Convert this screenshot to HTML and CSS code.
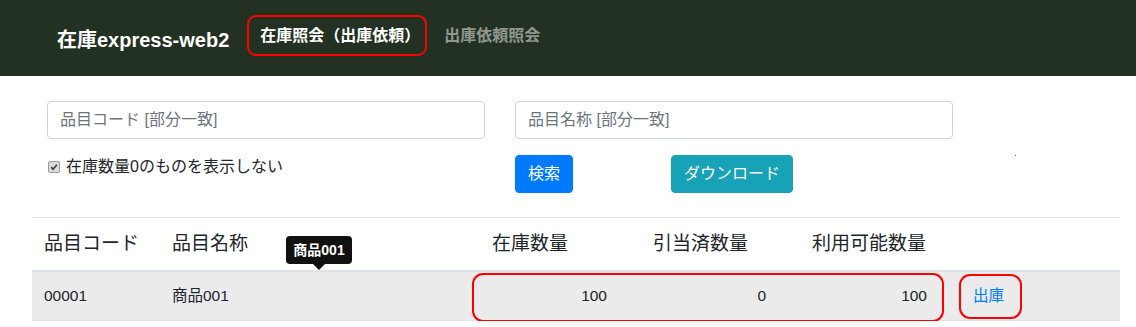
FILE: index.html
```html
<!DOCTYPE html>
<html lang="ja">
<head>
    <meta charset="UTF-8">
    <meta name="viewport" content="width=device-width, initial-scale=1.0">
    <title>在庫express-web2</title>
    <link rel="stylesheet" href="styles.css">
</head>
<body>

    <nav class="navbar">
        <a class="brand" href="#">在庫express-web2</a>
        <ul class="nav">
            <li><a class="nav-link active" href="#">在庫照会（出庫依頼<span class="paren">）</span></a></li>
            <li><a class="nav-link" href="#">出庫依頼照会</a></li>
        </ul>
    </nav>

    <main class="content">
        <form class="search">
            <div class="field"><input type="text" placeholder="品目コード [部分一致]"></div>
            <div class="field"><input type="text" placeholder="品目名称 [部分一致]"></div>
            <div class="field"></div>
            <div class="field">
                <label class="check">
                    <span class="box">
                        <svg width="12" height="12" viewBox="0 0 12 12"><path d="M2.6 6.2 L4.9 8.6 L9.4 3.2" fill="none" stroke="#3a3a3a" stroke-width="2"/></svg>
                    </span>
                    在庫数量0のものを表示しない
                </label>
            </div>
            <div class="field buttons">
                <button type="button" class="btn btn-primary">検索</button>
                <button type="button" class="btn btn-info">ダウンロード</button>
            </div>
            <div class="field"><span class="dot"></span></div>
        </form>

        <div class="result">
            <table>
                <colgroup>
                    <col style="width: 128px">
                    <col style="width: 320px">
                    <col style="width: 161px">
                    <col style="width: 159px">
                    <col style="width: 161px">
                    <col>
                </colgroup>
                <thead>
                    <tr>
                        <th>品目コード</th>
                        <th>品目名称</th>
                        <th>在庫数量</th>
                        <th>引当済数量</th>
                        <th>利用可能数量</th>
                        <th></th>
                    </tr>
                </thead>
                <tbody>
                    <tr>
                        <td>00001</td>
                        <td>商品001</td>
                        <td class="num">100</td>
                        <td class="num">0</td>
                        <td class="num">100</td>
                        <td><a href="#" class="ship">出庫</a></td>
                    </tr>
                </tbody>
            </table>

            <!-- tooltip over the name cell -->
            <div class="tooltip">商品001</div>

            <!-- red marks -->
            <div class="mark mark-qty"></div>
            <div class="mark mark-ship"></div>
        </div>
    </main>

</body>
</html>
```

FILE: styles.css
```css
body {
    margin: 0;
    font-family: 'Liberation Sans', 'Noto Sans CJK JP', sans-serif;
    color: #212529;
    background-color: #fff;
}

.navbar {
    height: 76px;
    background-color: #233122;
    display: flex;
    align-items: center;
    padding-left: 57px;
}
.brand {
    color: #fff;
    font-size: 20px;
    font-weight: bold;
    text-decoration: none;
    margin-right: 18px;
    white-space: nowrap;
}
.nav {
    list-style: none;
    margin: 0 0 5px 0;
    padding: 0;
    display: flex;
    gap: 4px;
}
.nav-link {
    display: block;
    padding: 8px 11px;
    border: 2px solid transparent;
    border-radius: 9px;
    font-size: 16px;
    line-height: 21px;
    font-weight: bold;
    color: rgba(255, 255, 255, 0.5);
    text-decoration: none;
    white-space: nowrap;
}
.nav-link.active {
    color: #fff;
    border-color: #f00;
}
.paren {
    margin-right: -6px;
}

.content {
    padding: 25px 16px 0 32px;
}

.search {
    display: grid;
    grid-template-columns: 468px 468px 1fr;
    row-gap: 16px;
}
.field {
    padding: 0 15px;
}
.field input {
    box-sizing: border-box;
    width: 100%;
    height: 38px;
    padding: 6px 12px;
    font-family: inherit;
    font-size: 16px;
    color: #495057;
    border: 1px solid #ced4da;
    border-radius: 4px;
}
.field input::placeholder {
    color: #6c757d;
}

.check {
    display: flex;
    align-items: center;
    font-size: 16px;
    line-height: 24px;
}
.box {
    box-sizing: border-box;
    width: 12px;
    height: 12px;
    margin: 0 6px 0 1px;
    border: 1px solid #9a9a9a;
    border-radius: 2px;
    background-color: #dcdcdc;
    display: flex;
    align-items: center;
    justify-content: center;
}
.box svg {
    width: 10px;
    height: 10px;
}

.buttons {
    display: flex;
    gap: 98px;
}
.btn {
    height: 38px;
    padding: 6px 12px;
    border: 1px solid transparent;
    border-radius: 4px;
    font-family: inherit;
    font-size: 16px;
    line-height: 24px;
    color: #fff;
    cursor: pointer;
}
.btn-primary {
    background-color: #007bff;
    border-color: #007bff;
}
.btn-info {
    background-color: #17a2b8;
    border-color: #17a2b8;
}

.dot {
    display: block;
    width: 1px;
    height: 1px;
    margin-left: 32px;
    background-color: #a33;
}

.result {
    position: relative;
    margin-top: 24px;
}
table {
    width: 100%;
    border-collapse: collapse;
    table-layout: fixed;
}
th {
    text-align: left;
    font-weight: normal;
    font-size: 19px;
    line-height: 28px;
    padding: 12px;
    border-top: 1px solid #dee2e6;
    border-bottom: 2px solid #dee2e6;
    white-space: nowrap;
}
td {
    font-size: 15.5px;
    line-height: 24px;
    padding: 12px;
    background-color: #ebebeb;
    border-bottom: 1px solid #dee2e6;
}
td.num {
    text-align: right;
    padding-right: 34px;
}
.ship {
    color: #007bff;
    text-decoration: none;
}

.tooltip {
    position: absolute;
    left: 254px;
    top: 19px;
    width: 66px;
    box-sizing: border-box;
    padding: 4px 0;
    text-align: center;
    font-size: 14px;
    line-height: 20px;
    font-weight: bold;
    color: #fff;
    background-color: #111;
    border-radius: 4px;
}
.tooltip::after {
    content: '';
    position: absolute;
    left: 27px;
    bottom: -6px;
    border-left: 6px solid transparent;
    border-right: 6px solid transparent;
    border-top: 6px solid #111;
}

.mark {
    position: absolute;
    border: 2px solid #f00;
    border-radius: 11px;
    box-sizing: border-box;
}
.mark-qty {
    left: 440px;
    top: 56px;
    width: 472px;
    height: 49px;
}
.mark-ship {
    left: 927px;
    top: 57px;
    width: 63px;
    height: 45px;
}
```
